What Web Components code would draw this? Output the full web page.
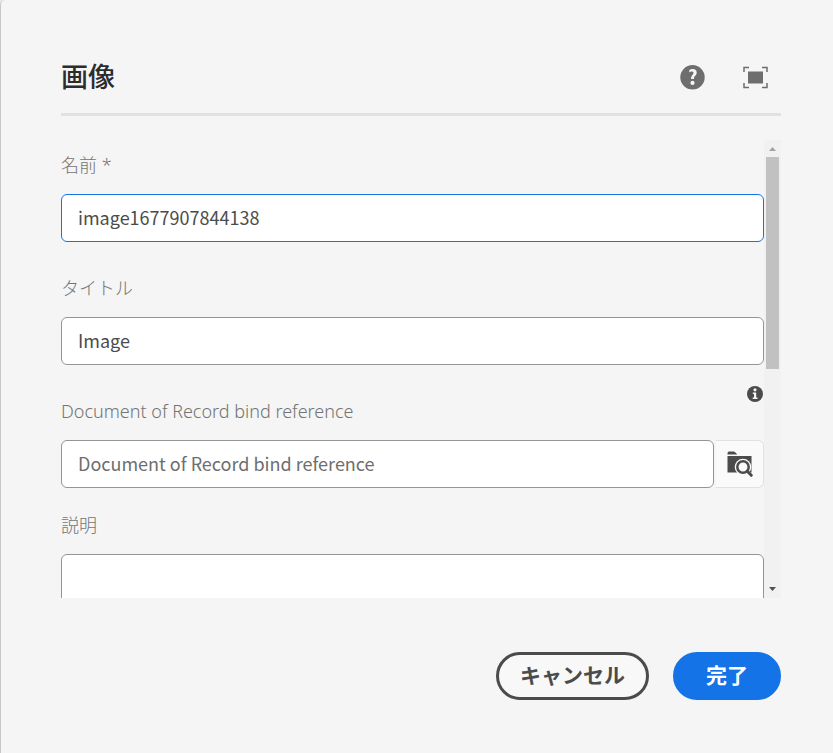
<!DOCTYPE html>
<html lang="ja">
<head>
<meta charset="utf-8">
<meta name="viewport" content="width=device-width, initial-scale=1">
<title>画像</title>
<style>
  body { margin: 0; background: #e8e8e8; font-family: "Noto Sans CJK JP", sans-serif; }
</style>
</head>
<body>
<settings-dialog>
  <span slot="title">画像</span>
  <icon-button slot="tools" label="ヘルプ">
    <svg width="26" height="26" viewBox="0 0 26 26"><circle cx="12.500" cy="13.300" r="12.200" fill="#6e6e6e"/><path d="M9.300 8.200V6C10.300 5.300 11.700 5.100 12.800 5.100C15.300 5.100 16.700 6.400 16.700 8.500C16.700 11.800 13.800 11.700 14 15H11.100C10.800 11.500 13.500 10.900 13.500 8.800C13.500 7.300 11 7.100 9.300 8.200z" fill="#f5f5f5"/><circle cx="12.500" cy="18.900" r="2.100" fill="#f5f5f5"/></svg>
  </icon-button>
  <icon-button slot="tools" label="全画面">
    <svg width="26" height="26" viewBox="0 0 26 26"><path d="M1 8V3.500H6M19 3.500H24V8M24 19V23.500H19M6 23.500H1V19" fill="none" stroke="#6e6e6e" stroke-width="1.500"/><path d="M5 7.500h15v12H5z" fill="#6e6e6e"/></svg>
  </icon-button>

  <form-field label="名前 *" value="image1677907844138" active></form-field>
  <form-field label="タイトル" value="Image"></form-field>
  <form-field label="Document of Record bind reference" placeholder="Document of Record bind reference" compact info browse></form-field>
  <form-field label="説明" multiline></form-field>

  <pill-button slot="actions">キャンセル</pill-button>
  <pill-button slot="actions" primary>完了</pill-button>
</settings-dialog>

<script>
class SettingsDialog extends HTMLElement {
  constructor() {
    super();
    this.attachShadow({ mode: "open" }).innerHTML = `
      <style>
        :host { display: flex; flex-direction: column; box-sizing: border-box; height: 100vh;
          padding: 40px 52px 53px 60px; background: #f5f5f5;
          border-left: 1px solid #c8c8c8; border-top-left-radius: 5px; }
        header { display: flex; align-items: center; justify-content: space-between;
          box-sizing: border-box; min-height: 76px; border-bottom: 3px solid #e1e1e1; }
        h1 { margin: 0; padding-bottom: 2px; font-size: 27px; line-height: 40px; font-weight: 500; color: #2c2c2c; }
        .tools { display: flex; gap: 37px; padding-right: 12px; }
        .body { display: grid; grid-template-columns: minmax(0, 1fr) 17px; flex: 1; min-height: 0; margin-top: 24px; }
        .fields { overflow-y: auto; scrollbar-width: none; padding-top: 13px; }
        footer { display: flex; justify-content: flex-end; gap: 24px; margin-top: 54px; }
      </style>
      <header><h1><slot name="title"></slot></h1><div class="tools"><slot name="tools"></slot></div></header>
      <div class="body"><div class="fields"><slot></slot></div><scroll-track></scroll-track></div>
      <footer><slot name="actions"></slot></footer>`;
  }
}

class IconButton extends HTMLElement {
  constructor() {
    super();
    this.attachShadow({ mode: "open" }).innerHTML = `
      <style>
        :host { display: block; }
        button { display: flex; padding: 0; border: 0; background: none; cursor: pointer; }
      </style>
      <button type="button"><slot></slot></button>`;
  }
  connectedCallback() {
    this.shadowRoot.querySelector("button").setAttribute("aria-label", this.getAttribute("label"));
  }
}

class ScrollTrack extends HTMLElement {
  constructor() {
    super();
    this.attachShadow({ mode: "open" }).innerHTML = `
      <style>
        :host { display: grid; grid-template-rows: 17px minmax(0, 1fr) 17px; justify-items: center; background: #f1f1f1; }
        .thumb { width: 13px; height: 50%; background: #c1c1c1; }
      </style>
      <svg width="17" height="17" viewBox="0 0 17 17"><path d="M5 11L8.500 7L12 11z" fill="#a3a3a3"/></svg>
      <div class="thumb"></div>
      <svg width="17" height="17" viewBox="0 0 17 17"><path d="M5 6L8.500 10L12 6z" fill="#505050"/></svg>`;
  }
}

class FormField extends HTMLElement {
  connectedCallback() {
    const has = n => this.hasAttribute(n);
    const get = n => this.getAttribute(n) || "";
    const control = has("multiline")
      ? `<textarea id="control"></textarea>`
      : `<input id="control" type="text" value="${get("value")}" placeholder="${get("placeholder")}">`;
    const info = has("info") ? `
      <button class="info" type="button" aria-label="情報"><svg width="16" height="16" viewBox="0 0 16 16"><circle cx="8" cy="8" r="8" fill="#4b4b4b"/><circle cx="8" cy="3.800" r="1.600" fill="#f4f4f4"/><path d="M5.800 6.500H9.200V11.500H10.500V13H5.700V11.500H7V8H5.800z" fill="#f4f4f4"/></svg></button>` : "";
    const browse = has("browse") ? `
      <button class="browse" type="button" aria-label="参照"><svg width="28" height="28" viewBox="0 0 28 28"><path d="M1.500 3.500Q1.500 1.500 3 1.500H7.500Q8.500 1.500 9.200 2.300L11.300 4.500H1.500zM1.500 6H25.500V22.500H1.500z" fill="#4b4b4b"/><circle cx="17" cy="17" r="8.300" fill="#fafafa"/><circle cx="17" cy="17" r="5.700" fill="none" stroke="#4b4b4b" stroke-width="2.500"/><path d="M21.200 21.200L25.300 25.300" stroke="#4b4b4b" stroke-width="3" stroke-linecap="round"/></svg></button>` : "";
    this.attachShadow({ mode: "open" }).innerHTML = `
      <style>
        :host { display: block; position: relative; margin-bottom: 34px; }
        :host([compact]) { margin-bottom: 25px; }
        label { display: block; margin-bottom: 17px; font-family: "Noto Sans", "Noto Sans CJK JP", sans-serif;
          font-size: 18px; line-height: 24px; font-weight: 300; color: #747474; }
        .row { display: flex; }
        input, textarea { flex: 1; min-width: 0; box-sizing: border-box; height: 48px; margin: 0; padding: 0 16px 3px;
          border: 1px solid #959595; border-radius: 6px; outline: 0; background: #fff; color: #4b4b4b;
          font: 18px "Noto Sans CJK JP", sans-serif; }
        textarea { height: 96px; resize: none; }
        input::placeholder { color: #6e6e6e; opacity: 1; }
        :host([active]) input { border-color: #1473e6; }
        button { display: flex; align-items: center; justify-content: center; padding: 0; border: 0; background: none; cursor: pointer; }
        .info { position: absolute; top: -13px; right: 1px; }
        .browse { box-sizing: border-box; width: 48px; margin-left: 2px; border: 1px solid #e1e1e1; border-left: 0;
          border-radius: 0 6px 6px 0; background: #fafafa; }
      </style>
      <label for="control">${get("label")}</label>${info}
      <div class="row">${control}${browse}</div>`;
  }
}

class PillButton extends HTMLElement {
  constructor() {
    super();
    this.attachShadow({ mode: "open" }).innerHTML = `
      <style>
        :host { display: block; }
        button { box-sizing: border-box; height: 48px; padding: 0 21px 4px; border: 3px solid #4b4b4b; border-radius: 24px;
          background: #f8f8f8; color: #4b4b4b; font: 700 21px "Noto Sans CJK JP", sans-serif; cursor: pointer; }
        :host([primary]) button { padding: 0 30px 4px; border-color: #1473e6; background: #1473e6; color: #fff; }
      </style>
      <button type="button"><slot></slot></button>`;
  }
}

customElements.define("scroll-track", ScrollTrack);
customElements.define("icon-button", IconButton);
customElements.define("form-field", FormField);
customElements.define("pill-button", PillButton);
customElements.define("settings-dialog", SettingsDialog);
</script>
</body>
</html>
